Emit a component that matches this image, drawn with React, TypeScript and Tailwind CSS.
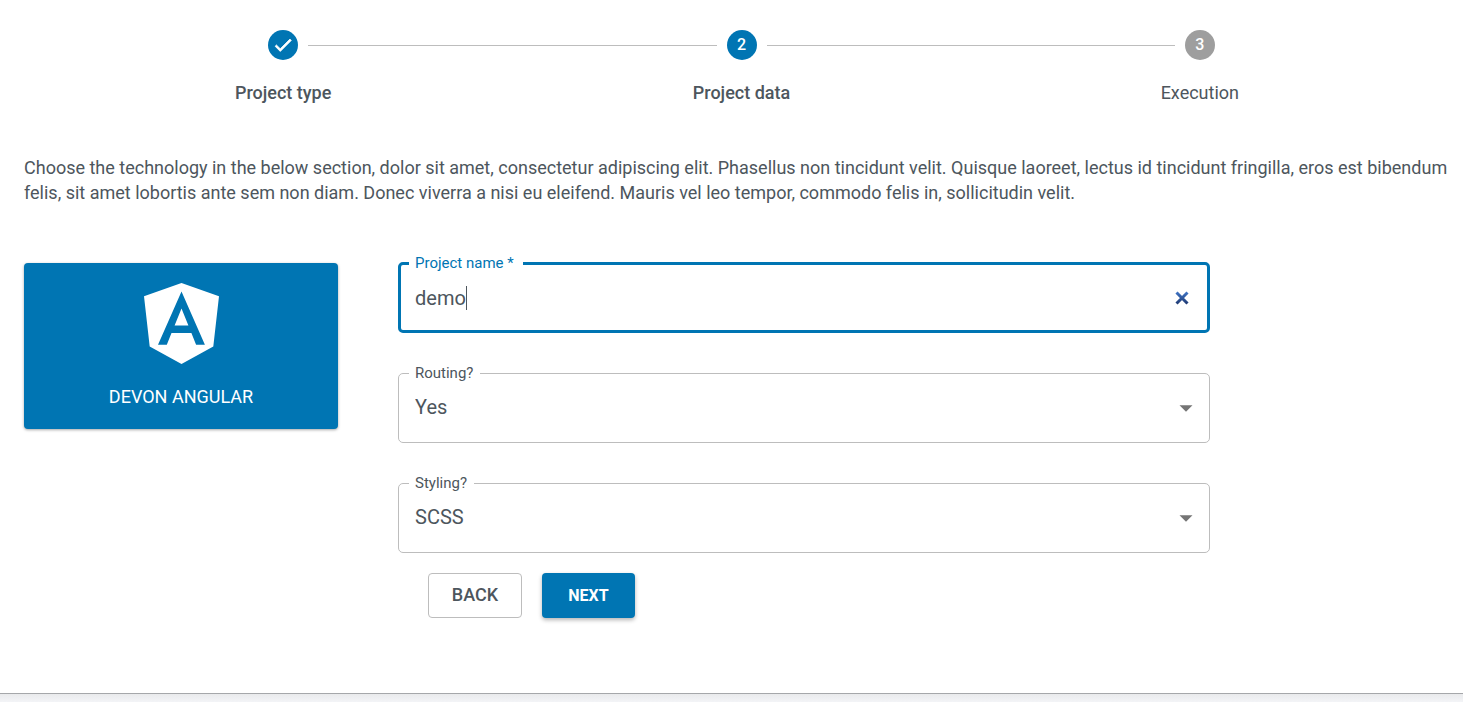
import { useState } from 'react';

type StepState = 'done' | 'current' | 'upcoming';

const steps: { label: string; state: StepState }[] = [
  { label: 'Project type', state: 'done' },
  { label: 'Project data', state: 'current' },
  { label: 'Execution', state: 'upcoming' },
];

function Stepper() {
  return (
    <ol className="grid grid-cols-3 pt-[30px] pr-[34px] pl-[54px]">
      {steps.map(({ label, state }, index) => (
        <li key={label} className="flex flex-col items-center gap-[21px]">
          <div className="flex w-full items-center gap-2.5">
            <span className={index === 0 ? 'h-px flex-1' : 'h-px flex-1 bg-[#bdbdbd]'} />
            <span
              className={
                state === 'upcoming'
                  ? 'flex size-[30px] items-center justify-center rounded-full bg-[#9e9e9e] text-base font-medium text-white'
                  : 'flex size-[30px] items-center justify-center rounded-full bg-[#0075b3] text-base font-medium text-white'
              }
            >
              {state === 'done' ? (
                <svg viewBox="0 0 24 24" className="size-[22px]" fill="currentColor" aria-hidden="true">
                  <path d="M9 16.17 4.83 12l-1.42 1.41L9 19 21 7l-1.41-1.41z" stroke="currentColor" strokeWidth="0.9" />
                </svg>
              ) : (
                index + 1
              )}
            </span>
            <span className={index === steps.length - 1 ? 'h-px flex-1' : 'h-px flex-1 bg-[#bdbdbd]'} />
          </div>
          <span className={state === 'upcoming' ? 'text-lg leading-6' : 'text-lg leading-6 font-medium'}>{label}</span>
        </li>
      ))}
    </ol>
  );
}

function SelectField({ id, label, options }: { id: string; label: string; options: string[] }) {
  return (
    <fieldset className="relative h-20 rounded-[5px] border border-[#bdbdbd] pl-2.5">
      <legend className="pr-[7px] pl-1.5 text-[15px] leading-5">
        <label htmlFor={id}>{label}</label>
      </legend>
      <select
        id={id}
        className="h-12 w-full appearance-none bg-transparent px-1.5 text-xl outline-none"
      >
        {options.map((option) => (
          <option key={option}>{option}</option>
        ))}
      </select>
      <svg
        viewBox="0 0 14 7"
        className="pointer-events-none absolute top-[22px] right-4 h-[7px] w-[14px]"
        fill="#757575"
        aria-hidden="true"
      >
        <path d="M0.5 0.2h13L7 6.8z" />
      </svg>
    </fieldset>
  );
}

export default function App() {
  const [name, setName] = useState('demo');

  return (
    <div className="flex min-h-screen flex-col bg-[#f3f4f7] font-[Roboto,sans-serif] text-[#4d565d]">
      <main className="flex-1 border-b border-[#a5a7aa] bg-white">
        <Stepper />

        <p className="mt-[50px] pr-2 pl-6 text-lg leading-[25px]">
          Choose the technology in the below section, dolor sit amet, consectetur adipiscing elit. Phasellus non
          tincidunt velit. Quisque laoreet, lectus id tincidunt fringilla, eros est bibendum felis, sit amet lobortis
          ante sem non diam. Donec viverra a nisi eu eleifend. Mauris vel leo tempor, commodo felis in, sollicitudin
          velit.
        </p>

        <div className="mt-12 flex items-start gap-[60px] px-6">
          <section className="mt-2.5 flex h-[166px] w-[314px] shrink-0 flex-col items-center rounded-[4px] bg-[#0075b3] pt-5 text-white shadow-[0_1px_3px_rgba(0,0,0,0.35)]">
            <svg viewBox="0 0 75 81" className="h-[81px] w-[75px]" aria-hidden="true">
              <path
                fill="#fff"
                fillRule="evenodd"
                d="M37.5 0 75 13.3 69.3 63.4 37.5 81 5.7 63.4 0 13.3ZM37.5 8.5 14 61.8H22.8L27.5 50H47.4L52.1 61.8H60.9ZM37.5 25.6 44.4 42.5H30.6Z"
              />
            </svg>
            <h2 className="mt-[21px] text-lg leading-6">DEVON ANGULAR</h2>
          </section>

          <form className="max-w-[812px] flex-1" onSubmit={(event) => event.preventDefault()}>
            <div className="flex flex-col gap-[30px]">
              <fieldset className="h-20 rounded-[5px] border-3 border-[#0075b3] pr-[18px] pl-2">
                <legend className="pr-[9px] pl-1.5 text-[15px] leading-5 text-[#0075b3]">
                  <label htmlFor="project-name">Project name *</label>
                </legend>
                <div className="flex h-[50px] items-center">
                  <input
                    id="project-name"
                    className="ml-1.5 field-sizing-content h-8 text-xl caret-transparent outline-none"
                    value={name}
                    onChange={(event) => setName(event.target.value)}
                  />
                  <span className="h-6 w-px bg-[#4d565d]" />
                  <button type="button" aria-label="Clear project name" className="ml-auto" onClick={() => setName('')}>
                    <svg viewBox="0 0 14 14" className="size-3.5" fill="none" aria-hidden="true">
                      <defs>
                        <linearGradient id="clear-fill" gradientUnits="userSpaceOnUse" x1="0" y1="0" x2="0" y2="14">
                          <stop offset="0" stopColor="#4379cc" />
                          <stop offset="1" stopColor="#1c356c" />
                        </linearGradient>
                      </defs>
                      <path d="M1.5 1.5 12.5 12.5M12.5 1.5 1.5 12.5" stroke="url(#clear-fill)" strokeWidth="3" />
                    </svg>
                  </button>
                </div>
              </fieldset>
              <SelectField id="routing" label="Routing?" options={['Yes', 'No']} />
              <SelectField id="styling" label="Styling?" options={['SCSS', 'CSS', 'Sass', 'Less']} />
            </div>

            <div className="mt-5 flex gap-5 pb-[75px] pl-[30px]">
              <button
                type="button"
                className="h-[45px] w-[94px] rounded-[4px] border border-[#bdbdbd] pb-0.5 text-lg font-medium"
              >
                BACK
              </button>
              <button
                type="submit"
                className="h-[45px] w-[93px] rounded-[4px] bg-[#0075b3] text-base font-bold text-white shadow-[0_2px_4px_rgba(0,0,0,0.3)]"
              >
                NEXT
              </button>
            </div>
          </form>
        </div>
      </main>
      <footer className="h-2 bg-linear-to-b from-[#e9eaec] to-[#f3f4f7]" />
    </div>
  );
}
